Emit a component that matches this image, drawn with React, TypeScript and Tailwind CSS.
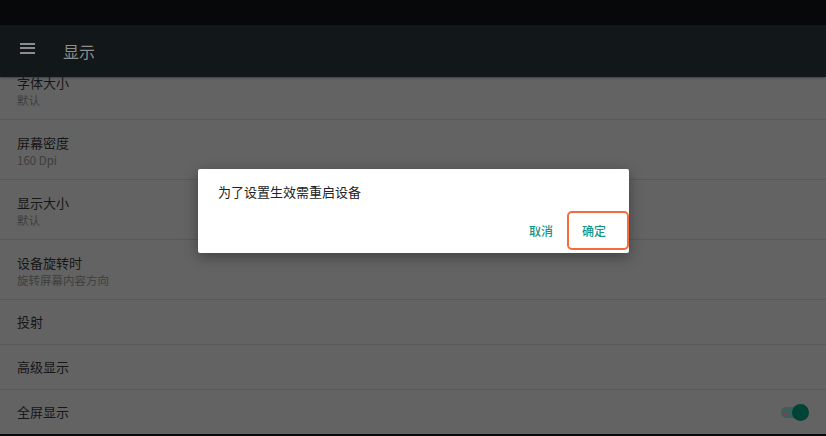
import React from 'react'

const font = { fontFamily: '"Noto Sans CJK SC", "Noto Sans", Roboto, sans-serif' }

const rows = [
  { title: '屏幕密度', sub: '160 Dpi' },
  { title: '显示大小', sub: '默认' },
  { title: '设备旋转时', sub: '旋转屏幕内容方向' },
]

function TwoLine({ title, sub }: { title: string; sub: string }) {
  return (
    <div className="h-[60px] border-b border-[#595959] pl-[17px] pt-[14px]">
      <div className="text-[13px] leading-[18px] text-[#161616]">{title}</div>
      <div className="text-[11.5px] leading-[16px] text-[#3e3e3e]">{sub}</div>
    </div>
  )
}

function OneLine({ title, last, children }: { title: string; last?: boolean; children?: React.ReactNode }) {
  return (
    <div
      className={`flex items-center justify-between pl-[17px] pr-[17px] text-[13px] text-[#161616] ${
        last ? 'h-[44px]' : 'h-[45px] border-b border-[#595959]'
      }`}
    >
      <span>{title}</span>
      {children}
    </div>
  )
}

export default function App() {
  return (
    <div className="relative w-[826px] h-[436px] overflow-hidden bg-[#636363]" style={font}>
      <div className="h-[25px] bg-[#07080a]" />
      <div className="relative z-10 h-[52px] bg-[#121719] flex items-center shadow-[0_1px_2px_rgba(0,0,0,0.35)]">
        <div className="ml-[20px] w-[15px] flex flex-col gap-[2.5px] -mt-[6px]">
          <span className="h-[2px] bg-[#8c8c8c]" />
          <span className="h-[2px] bg-[#8c8c8c]" />
          <span className="h-[2px] bg-[#8c8c8c]" />
        </div>
        <span className="ml-[28px] text-[16px] text-[#8e8e8e]">显示</span>
      </div>

      <div className="-mt-[17px]">
        <TwoLine title="字体大小" sub="默认" />
        {rows.map((r) => (
          <TwoLine key={r.title} title={r.title} sub={r.sub} />
        ))}
        <OneLine title="投射" />
        <OneLine title="高级显示" />
        <OneLine title="全屏显示" last>
          <div className="relative w-[29px] h-[17px] mt-[1px]">
            <div className="absolute left-[1px] top-[3px] w-[22px] h-[11px] rounded-full bg-[#3d5e5a]" />
            <div className="absolute right-0 top-0 w-[17px] h-[17px] rounded-full bg-[#004337]" />
            <div className="absolute left-[3px] top-[9px] w-[2px] h-[2px] rounded-full bg-[#d0104c]" />
          </div>
        </OneLine>
      </div>
      <div className="h-[3px] bg-[#07080a]" />

      <div className="absolute left-[198px] top-[169px] w-[431px] h-[84px] bg-white rounded-[2px] shadow-[0_4px_14px_rgba(0,0,0,0.35)] flex flex-col">
        <div className="pl-[20px] pt-[14px] text-[13px] leading-[18px] text-[#222]">为了设置生效需重启设备</div>
        <div className="mt-auto mb-[3px] flex items-center justify-end">
          <button className="text-[12px] font-medium text-[#169688] mr-[14px]">取消</button>
          <button className="h-[39px] w-[62px] border-2 border-[#f66a3c] rounded-[5px] text-[12px] font-medium text-[#169688] pr-[8px]">
            确定
          </button>
        </div>
      </div>
    </div>
  )
}
